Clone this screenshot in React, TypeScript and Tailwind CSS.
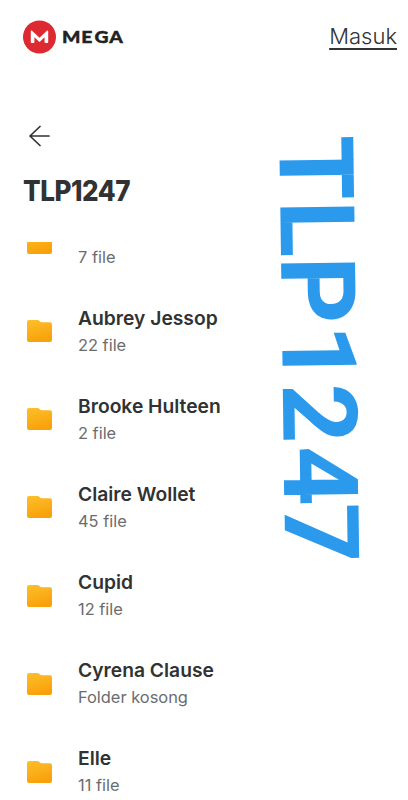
type Folder = {
  name: string;
  info: string;
};

const FOLDERS: Folder[] = [
  { name: "", info: "7 file" },
  { name: "Aubrey Jessop", info: "22 file" },
  { name: "Brooke Hulteen", info: "2 file" },
  { name: "Claire Wollet", info: "45 file" },
  { name: "Cupid", info: "12 file" },
  { name: "Cyrena Clause", info: "Folder kosong" },
  { name: "Elle", info: "11 file" },
];

function Logo() {
  return (
    <svg width="104" height="34" viewBox="0 0 104 34" role="img" aria-label="MEGA">
      <circle cx="16.5" cy="17" r="16.5" fill="#dc2a30" />
      <path
        d="M7.8 11.2c0-.8.8-1 1.3-.5l7.4 7.1 7.4-7.1c.5-.5 1.3-.3 1.3.5v11c0 .5-.3.8-.8.8h-2c-.5 0-.8-.3-.8-.8v-5l-4.5 4.2c-.4.4-.8.4-1.2 0l-4.5-4.2v5c0 .5-.3.8-.8.8h-2c-.5 0-.8-.3-.8-.8z"
        fill="#fff"
      />
      <text
        transform="translate(39 23.4) scale(1.14 1)"
        y="0"
        x="0 17 28.6 41.4"
        className="font-['Lato',sans-serif] text-[17px] font-black"
        fill="#222"
        stroke="#222"
        strokeWidth="0.4"
      >
        MEGA
      </text>
    </svg>
  );
}

function FolderIcon() {
  return (
    <svg width="25" height="22" viewBox="0 0 25 22" className="shrink-0">
      <defs>
        <linearGradient id="folder" x1="0" y1="0" x2="0.3" y2="1">
          <stop offset="0" stopColor="#fdc02a" />
          <stop offset="1" stopColor="#f9a10b" />
        </linearGradient>
      </defs>
      <path
        d="M0 2Q0 0 2 0h8c1.2 0 1.8.3 2.5 1.1.7.8 1.3 1.2 2.5 1.2h8q2 0 2 2V20q0 2-2 2H2q-2 0-2-2z"
        fill="url(#folder)"
      />
    </svg>
  );
}

function FolderRow({ name, info }: Folder) {
  return (
    <li className="flex h-[88.15px] items-center pl-[27px]">
      <div className="w-[51px]">
        <FolderIcon />
      </div>
      <div className="whitespace-nowrap">
        <p className="h-7 text-[19.25px] leading-7 font-semibold text-[#303233]">{name}</p>
        <p className="h-[27px] text-[16.4px] leading-[27px] text-[#6a6c6e]">{info}</p>
      </div>
    </li>
  );
}

// Large label laid over the list, turned to read downwards.
function Watermark() {
  return (
    <svg className="pointer-events-none absolute top-0 left-0" width="408" height="800">
      <text
        transform="translate(279.3 137) rotate(89.2)"
        x="-1 64 120 188 247 309.5 366.5"
        y="0"
        className="font-['Roboto',sans-serif] text-[104px] font-bold"
        fill="#2b9aed"
      >
        TLP1247
      </text>
    </svg>
  );
}

export default function App() {
  return (
    <div className="relative flex h-[800px] w-[408px] flex-col overflow-hidden bg-white font-['Inter',sans-serif] text-[#303233]">
      <header className="flex h-[74px] shrink-0 items-center justify-between pr-[11px] pl-[23px]">
        <Logo />
        <a className="-mt-px text-[22px] underline decoration-[1.5px] underline-offset-[4px] [font-weight:350]">
          Masuk
        </a>
      </header>
      <div className="h-[168px] shrink-0 pt-[51px] pl-[23px]">
        <svg
          width="21"
          height="22"
          viewBox="0 0 21 22"
          className="ml-1.5"
          fill="none"
          stroke="#303233"
          strokeWidth="1.7"
          strokeLinecap="round"
          strokeLinejoin="round"
        >
          <path d="M20 11H1M11 1.5L1 11l10 9.5" />
        </svg>
        <h1 className="mt-[25px] origin-left scale-x-[0.93] text-[28px] leading-[38px] font-extrabold tracking-[-0.5px]">
          TLP1247
        </h1>
      </div>
      <main className="min-h-0 flex-1 overflow-hidden">
        <ul className="-mt-[43px]">
          {FOLDERS.map((folder) => (
            <FolderRow key={folder.info} {...folder} />
          ))}
        </ul>
      </main>
      <Watermark />
    </div>
  );
}
